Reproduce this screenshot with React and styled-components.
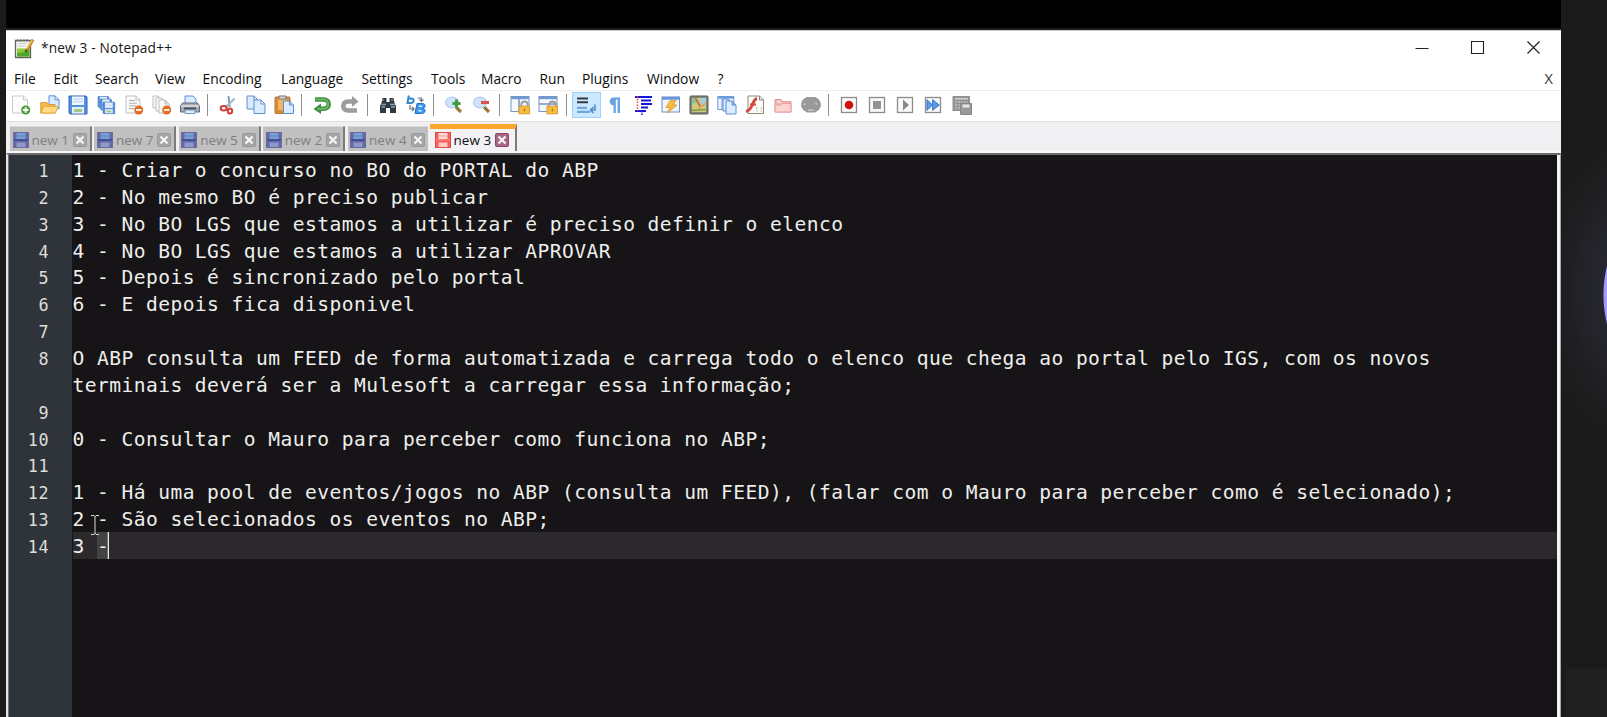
import React from "react";
import styled, { createGlobalStyle } from "styled-components";

const Global = createGlobalStyle`
  * { box-sizing: border-box; }
  html, body { margin: 0; background: #1b1b1b; overflow: hidden; }
`;

const Screen = styled.div`
  display: flex;
  width: 1607px;
  height: 717px;
  overflow: hidden;
  padding-left: 6px;
  background: #1b1b1b;
  font-family: "Open Sans", "Noto Sans", sans-serif;
`;

const Desktop = styled.div`
  display: flex;
  flex-direction: column;
  width: 1555px;
  height: 717px;
  flex: none;
`;

const TopBand = styled.div`
  height: 30px;
  flex: none;
  background: #000;
  border-bottom: 2px solid #1d1d1d;
`;

const TitleBar = styled.header`
  display: flex;
  align-items: center;
  height: 35px;
  flex: none;
  padding: 0 17px 0 8px;
  background: #fff;
  border-top: 1px solid #c9c7c9;
`;

const Title = styled.span`
  margin-left: 6px;
  font-size: 13.7px;
  letter-spacing: 0.16px;
  line-height: 20px;
  color: #161616;
  white-space: pre;
  flex: 1;
`;

const WindowButtons = styled.div`
  display: flex;
  gap: 36px;
  align-items: center;
  padding-bottom: 1px;
`;

const MenuBar = styled.nav`
  display: flex;
  align-items: center;
  height: 25px;
  flex: none;
  padding-left: 8px;
  padding-top: 2px;
  background: #fff;
  color: #0c0c0c;
  font-size: 13.8px;
`;

const MenuItem = styled.span`
  width: ${(p) => p.$w}px;
  flex: none;
  line-height: 24px;
  white-space: nowrap;
`;

const CloseDoc = styled.span`
  margin-left: auto;
  padding-right: 8px;
  color: #333;
  font-size: 14.5px;
  line-height: 24px;
`;

const ToolBar = styled.div`
  display: flex;
  align-items: center;
  height: 31px;
  flex: none;
  padding-left: 1.4px;
  padding-bottom: 2px;
  background: #fff;
  border-top: 1px solid #ededee;
`;

const ToolButton = styled.span`
  display: flex;
  align-items: center;
  justify-content: center;
  width: 28.1px;
  height: 26px;
  flex: none;
  background: ${(p) => (p.$on ? "#cce8ff" : "transparent")};
  border: 1px solid ${(p) => (p.$on ? "#99d1ff" : "transparent")};
  svg { flex: none; display: block; }
`;

const Separator = styled.span`
  display: flex;
  width: 9.9px;
  flex: none;
  padding-left: 3px;
  &::before { content: ""; width: 1px; height: 22px; background: #8f8f8f; }
`;

const TabStrip = styled.div`
  display: flex;
  align-items: flex-end;
  height: 32px;
  flex: none;
  padding-left: 4px;
  background: #f0eff1;
  border-top: 1px solid #e0e0e0;
  border-bottom: 2px solid #f8f7f8;
`;

const Tab = styled.div`
  display: flex;
  align-items: center;
  flex: none;
  width: ${(p) => (p.$active ? 87 : p.$last ? 80 : 82)}px;
  height: ${(p) => (p.$active ? 27.5 : 25)}px;
  margin-right: ${(p) => (p.$last ? 2 : 2.4)}px;
  padding-top: ${(p) => (p.$active ? 0 : 1)}px;
  padding-left: ${(p) => (p.$active ? 5 : 2.5)}px;
  border-top: ${(p) => (p.$active ? "5px solid #fba62d" : "1px solid #d8d8d8")};
  border-right: ${(p) => (p.$last ? "none" : "2px solid #7b7b7b")};
  background: ${(p) => (p.$active ? "#f2f1f3" : "#c0c0c0")};
  color: ${(p) => (p.$active ? "#0d0d14" : "#7f7f7f")};
  svg { flex: none; }
`;

const TabLabel = styled.span`
  width: 44.5px;
  padding-left: 3px;
  flex: none;
  font-size: 13.5px;
  line-height: 20px;
  white-space: nowrap;
`;

const Editor = styled.main`
  display: flex;
  flex: 1;
  min-height: 0;
  border-top: 2px solid #6c6b6e;
  border-left: 2px solid #e5e1e4;
  border-right: 1px solid #a5a4a6;
  background: #161416;
`;

const Lines = styled.div`
  position: relative;
  display: flex;
  flex-direction: column;
  flex: 1;
  border-left: 1px solid #77777a;
  border-right: 3px solid #f5f1f4;
  background: linear-gradient(90deg, #2e3439 0 63.5px, #161416 63.5px);
  padding-top: 1.1px;
`;

const Line = styled.div`
  display: flex;
  height: 26.85px;
  flex: none;
  font-family: "DejaVu Sans Mono", monospace;
`;

const LineNumber = styled.span`
  width: 63.5px;
  padding-right: 23.5px;
  flex: none;
  text-align: right;
  font-size: 16.8px;
  letter-spacing: 0.5px;
  line-height: 31px;
  color: #dcdedb;
`;

const Code = styled.span`
  flex: 1;
  font-size: 19.6px;
  letter-spacing: 0.44px;
  line-height: 30.5px;
  color: #eeeeec;
  white-space: pre;
  background: ${(p) => (p.$current ? "#2b292b" : "transparent")};
`;

const Selected = styled.span`
  display: inline-block;
  height: 26.85px;
  vertical-align: top;
  background: #434244;
  box-shadow: inset -1.3px 0 #e8e8e8;
`;

const Pointer = styled.svg`
  position: absolute;
  left: 79px;
  top: 360px;
`;

const SidePanel = styled.aside`
  display: flex;
  flex-direction: column;
  justify-content: flex-end;
  flex: 1;
  padding-left: 5px;
  background:
    radial-gradient(circle 122px at 164px 295px, #a09cfc 0 121px, transparent 122px),
    radial-gradient(ellipse 100px 155px at 78px 290px, #2c2b3b 0, #26262f 42%, #1f1f22 75%, transparent 100%),
    #1b1b1b;
`;

const SideFooter = styled.div`
  height: 49px;
  background: #202020;
`;

const Svg = ({ children, s = 20, b = 20 }) => (
  <svg width={s} height={s} viewBox={`0 0 ${b} ${b}`} fill="none">{children}</svg>
);

const Sheet = ({ x = 0, y = 0, w = 11, h = 14, fill = "#dcebff", stroke = "#5d8fd0" }) => (
  <path
    d={`M${x} ${y}h${w - 4}l4 4v${h - 4}h${-w}z M${x + w - 4} ${y}v4h4`}
    fill={fill}
    stroke={stroke}
  />
);

const Badge = ({ color, plus }) => (
  <>
    <circle cx="14.7" cy="15" r="4.5" fill={color} />
    <path d={plus ? "M12 15h5.4M14.7 12.3v5.4" : "M12 15h5.4"} stroke="#fff" strokeWidth="1.8" />
  </>
);

const Disk = ({ x = 0, y = 0, k = 1 }) => (
  <g transform={`translate(${x} ${y}) scale(${k})`}>
    <path d="M1 1h17l1 1v17H2l-1-1z" fill="#5690dc" stroke="#2f67b8" />
    <path d="M4 1.5h12v8.5H4z" fill="#edf5ff" />
    <path d="M5 4h10M5 6.8h10" stroke="#b5cfee" />
    <path d="M4 12h12v6.5H4z" fill="#e9eff4" />
    <path d="M6 14h8v3H6z" fill="#9cc98b" />
  </g>
);

const Lens = ({ children }) => (
  <Svg>
    <path d="m12 12 5 5" stroke="#a98543" strokeWidth="3.4" />
    <path d="m11 11 5 5" stroke="#6c6148" strokeWidth="1" />
    <ellipse cx="8" cy="7.5" rx="6.5" ry="5.4" fill="#cfe3fb" stroke="#b4cfef" strokeWidth="1.2" />
    {children}
  </Svg>
);

const SyncPane = ({ across }) => (
  <Svg>
    <rect x="1" y="1.5" width="18" height="15" fill="#f4f8ff" stroke="#7896c0" />
    <path d="M1 3h18" stroke="#6f9ad6" strokeWidth="2.4" />
    <path d={across ? "M1 9h18" : "M9 3v13"} stroke="#7896c0" strokeWidth="1.5" />
    <path d="M11.3 12V9.7a3.2 3.2 0 0 1 6.4 0V12" stroke="#9b9b9b" strokeWidth="1.8" />
    <rect x="9" y="11.2" width="10.5" height="7.6" fill="#f9bd3e" stroke="#dd9c38" />
    <path d="M14.4 13.5v3" stroke="#b87820" strokeWidth="1.4" />
  </Svg>
);

const Frame = ({ children }) => (
  <Svg>
    <rect x="2.5" y="2.5" width="15" height="15" fill="#fafafa" stroke="#8b8b8b" strokeWidth="1.3" />
    {children}
  </Svg>
);

const icons = {
  create: <Svg><Sheet x={1.5} y={1} w={15} h={17} fill="#fcfcfc" stroke="#c9c9c9" /><Badge color="#4c9b3a" plus /></Svg>,
  open: (
    <Svg>
      <Sheet x={9} y={0.8} w={10} h={13} />
      <path d="M.8 18V7.5h6l1.5 2H15V18z" fill="#f7b94d" stroke="#dd9a35" />
      <path d="m1 18 2.5-6.5H18L15.5 18z" fill="#ffdc80" stroke="#e3a743" />
    </Svg>
  ),
  save: <Svg><Disk /></Svg>,
  saveAll: <Svg><Disk x={1.5} y={1} k={0.6} /><Disk x={4} y={3.5} k={0.6} /><Disk x={6.5} y={6.5} k={0.64} /></Svg>,
  close: (
    <Svg>
      <Sheet x={2} y={1} w={14} h={17} fill="#fafafa" stroke="#c0c0c0" />
      <path d="M5 5.5h6M5 8.2h8M5 10.9h7M5 13.6h5" stroke="#aaa" />
      <Badge color="#e76c23" />
    </Svg>
  ),
  closeAll: (
    <Svg>
      <Sheet x={1} y={1} w={9} h={12} fill="#fafafa" stroke="#bfbfbf" />
      <Sheet x={4} y={3} w={10} h={13} fill="#fafafa" stroke="#bfbfbf" />
      <Sheet x={7} y={5} w={10} h={13} fill="#fafafa" stroke="#bfbfbf" />
      <Badge color="#e76c23" />
    </Svg>
  ),
  print: (
    <Svg>
      <path d="M5 9V1h8l3 3v5" fill="#d9ebff" stroke="#5d91d6" />
      <path d="M2.5 8h15l2 3v6H.5v-6z" fill="#a7abb1" stroke="#606974" />
      <path d="M1 11h18" stroke="#e1e3e6" strokeWidth="1.5" />
      <path d="M4 12.5h12v2H4z" fill="#464d55" />
      <path d="M5 15h10v3.5H5z" fill="#dceaff" stroke="#7798c1" />
    </Svg>
  ),
  cut: (
    <Svg>
      <path d="m10.5 1 1.2 11" stroke="#7f9ebb" strokeWidth="2" />
      <path d="M16.5 3.5 8 12" stroke="#9eb8cf" strokeWidth="2.2" />
      <ellipse cx="5.7" cy="13.3" rx="3" ry="2.2" stroke="#cf3d36" strokeWidth="2" />
      <ellipse cx="12" cy="16" rx="2.2" ry="2.5" stroke="#cf3d36" strokeWidth="2" />
    </Svg>
  ),
  copy: <Svg><Sheet x={1} y={1} w={11} h={13} /><Sheet x={8} y={5} w={11} h={13.5} /></Svg>,
  paste: (
    <Svg>
      <rect x="1" y="2" width="15" height="16.5" rx="1" fill="#d88c38" stroke="#b97531" />
      <path d="M4 4h9v11H4z" fill="#f2b562" />
      <path d="M5 1h7v3H5z" fill="#d9d9d9" stroke="#777" />
      <Sheet x={9.5} y={6} w={10} h={12.5} />
    </Svg>
  ),
  undo: (
    <Svg>
      <path d="M3 4.5h8.5c7 0 7 9.3 0 9.3H7" stroke="#3b8b43" strokeWidth="4.6" />
      <path d="M9 8.5V19L1.5 14z" fill="#3b8b43" />
      <path d="M3.5 4.5h8c6.4 0 6.4 9.3 0 9.3H5" stroke="#67b45d" strokeWidth="2.2" />
    </Svg>
  ),
  redo: (
    <Svg>
      <path d="M17 15.5H8c-6.3 0-6.3-9 0-9h5" stroke="#9c9c9c" strokeWidth="4.6" />
      <path d="M12 1v11l6.5-5.5z" fill="#9c9c9c" />
    </Svg>
  ),
  find: (
    <Svg>
      <path d="M4.5 3h4v4h3V3h4l1 5 1.5 3v7h-6v-5H8v5H2v-7l1.5-3z" fill="#303841" />
      <path d="M5 4v2m9-2v2M3.5 12H7m6 0h4M3.5 9.5H8m4 0h5" stroke="#8d9fae" strokeWidth="1.3" />
    </Svg>
  ),
  replace: (
    <Svg>
      <path d="M2.8.5 1.5 8h3.3c3.5 0 4-4.5.5-4.5h-3" stroke="#3287d1" strokeWidth="2" />
      <path d="M4 10v4h4m-2-2 2.2 2L6 16.2M11.5 3h4v3m-2-1.5 2 2 2-2" stroke="#6b7682" strokeWidth="1.2" />
      <path d="m11 8.5-2 10h6.5c4.8 0 4.3-5 1.4-5 3.2-.8 2.9-5-.4-5z" fill="#3f98ed" stroke="#246fc5" />
      <path d="M13 11.2h3m-3.5 4.5h3" stroke="#e5f3ff" strokeWidth="1.5" />
    </Svg>
  ),
  zoomIn: <Lens><path d="M8.5 8.5h8M12.5 4.5v8" stroke="#3b9b43" strokeWidth="3" /></Lens>,
  zoomOut: <Lens><path d="M9 7.5h8" stroke="#dd5548" strokeWidth="3.2" /></Lens>,
  syncV: <SyncPane />,
  syncH: <SyncPane across />,
  wrap: (
    <Svg>
      <path d="M1 3.5h11M1 7.2h11" stroke="#343941" strokeWidth="2" />
      <path d="M1 12.8h10M1 16.8h13" stroke="#6fa6dc" strokeWidth="2.2" />
      <path d="M19 9.5v5.5h-4m2.5-3-3 3 3 3" stroke="#4e89c5" strokeWidth="1.5" />
    </Svg>
  ),
  pilcrow: (
    <Svg>
      <path d="M15 2.5H8.5c-5 0-5 7.8 0 7.8V18h2.3V4.5h1.8V18H15z" fill="#65a3e4" />
    </Svg>
  ),
  indent: (
    <Svg>
      <path d="M2 2h17M8 5.5h10M8 9h11M8 12.5h7M2 16h11" stroke="#1517d6" strokeWidth="2.1" />
      <path d="M9 16v4" stroke="#1517d6" strokeWidth="1.5" strokeDasharray="1.5 1" />
      <path d="M4.5 1v15" stroke="#ed3d35" strokeWidth="1.4" strokeDasharray="1.5 1.3" />
    </Svg>
  ),
  lang: (
    <Svg>
      <rect x="1" y="2" width="17.5" height="15" fill="#f0f4fb" stroke="#7192c3" />
      <path d="M1 3.3h17.5" stroke="#6595d8" strokeWidth="2.8" />
      <path d="m9 5.8 6-.3-3 4.5h4L6.5 18l2.3-5.5H5z" fill="#f9bd3d" stroke="#dfa040" />
    </Svg>
  ),
  map: (
    <Svg>
      <rect x="1" y="1" width="18" height="18" rx="1" fill="#85897a" stroke="#55584f" />
      <path d="M3 3h14v14H3z" fill="#b9d38b" />
      <path d="M3 11.5 7 10l10 4v3H3z" fill="#d9c873" />
      <path d="M12 3h5v8l-4-1z" fill="#a4cff5" />
      <path d="M3 3h4l2 4-6 2z" fill="#8bc0a0" />
      <path d="m6.5 3 5 9" stroke="#d9653a" strokeWidth="1.8" />
      <path d="m9 14 8-6" stroke="#dfa35c" strokeWidth="2" />
      <path d="m3 15.5 14-1" stroke="#6f9e52" strokeWidth="1.5" />
    </Svg>
  ),
  docs: (
    <Svg>
      <path d="M.8 1.5h16v13H.8z" fill="#edf4ff" stroke="#6e99d8" />
      <path d="M1 2.5h16" stroke="#6a9bdd" strokeWidth="2.2" />
      <path d="M5 3v11" stroke="#6e99d8" />
      <Sheet x={6} y={4} w={9} h={12} /><Sheet x={9} y={6} w={10} h={13} />
    </Svg>
  ),
  func: (
    <Svg>
      <Sheet x={3} y={1} w={15.5} h={17.5} fill="#fffef8" stroke="#8a8779" />
      <path d="M12 3.5c-3 .5-3.5 4-5 7-1.300 3-2.500 5-6 6" stroke="#d34b45" strokeWidth="3" />
      <path d="M5 9.500h6" stroke="#d34b45" strokeWidth="2.200" />
      <path d="M12.500 12c-1.300 1.500-1.300 3 0 4.500m3.300-4.500c1.300 1.500 1.300 3 0 4.500" stroke="#a5a5a5" strokeDasharray="2 1" />
    </Svg>
  ),
  folder: (
    <Svg>
      <path d="M2 17V4.500h6l1.500 2.200h8.500V17z" fill="#f3b6b6" stroke="#e39294" />
      <path d="M2 17V10h6l1.500-1.500H18V17z" fill="#fbd3d1" stroke="#e5a0a2" />
      <path d="M4.500 7h3" stroke="#fff" />
    </Svg>
  ),
  monitor: (
    <Svg>
      <path d="M5.500 2h9l4 3 1.300 3.500v3l-2 3.500-3.800 2.500H6L2.200 15 .2 11.500v-3L1.500 5z" fill="#999" />
      <path d="m3 10 1.500-1.500M14.500 8.200l1.800 1.300M7 15.200h6" stroke="#d0d0d0" strokeWidth="1.200" />
    </Svg>
  ),
  record: <Frame><circle cx="10" cy="10" r="4.300" fill="#d3120c" /></Frame>,
  stop: <Frame><path d="M6 6h8v8H6z" fill="#929292" /></Frame>,
  play: <Frame><path d="m8 4.500 6 5.500-6 5.500z" fill="#898989" /></Frame>,
  forward: <Frame><path d="m4 4.700 5.500 5.300L4 15.300zM9.700 4.700l6.500 5.300-6.500 5.300z" fill="#5c9eec" stroke="#2f71c7" /></Frame>,
  macroSave: (
    <Svg>
      <path d="M.500 1H18v15H.500z" fill="#929292" />
      <path d="M3 3.800h13" stroke="#e5e5e5" strokeWidth="1.200" />
      <path d="M3 7h13M3 10h6M3 13h5" stroke="#d5d5d5" strokeWidth="1.200" strokeDasharray="2 1" />
      <path d="M8.500 8.500H19.500V19.500H8.500z" fill="#999" stroke="#858585" />
      <path d="M10.500 9.500h7v3h-7z" fill="#e6e6e6" />
    </Svg>
  ),
};

const toolGroups = [
  ["create", "open", "save", "saveAll", "close", "closeAll", "print"],
  ["cut", "copy", "paste"],
  ["undo", "redo"],
  ["find", "replace"],
  ["zoomIn", "zoomOut"],
  ["syncV", "syncH"],
  ["wrap", "pilcrow", "indent", "lang", "map", "docs", "func", "folder", "monitor"],
  ["record", "stop", "play", "forward", "macroSave"],
];

const menus = [
  ["File", 39.5], ["Edit", 41.5], ["Search", 60], ["View", 47.5], ["Encoding", 78.5],
  ["Language", 80.5], ["Settings", 69.5], ["Tools", 50], ["Macro", 58.5], ["Run", 42.5],
  ["Plugins", 65], ["Window", 70.5], ["?", 10],
];

const rows = [
  [1, "1 - Criar o concurso no BO do PORTAL do ABP"],
  [2, "2 - No mesmo BO é preciso publicar"],
  [3, "3 - No BO LGS que estamos a utilizar é preciso definir o elenco"],
  [4, "4 - No BO LGS que estamos a utilizar APROVAR"],
  [5, "5 - Depois é sincronizado pelo portal"],
  [6, "6 - E depois fica disponivel"],
  [7, ""],
  [8, "O ABP consulta um FEED de forma automatizada e carrega todo o elenco que chega ao portal pelo IGS, com os novos"],
  ["", "terminais deverá ser a Mulesoft a carregar essa informação;"],
  [9, ""],
  [10, "0 - Consultar o Mauro para perceber como funciona no ABP;"],
  [11, ""],
  [12, "1 - Há uma pool de eventos/jogos no ABP (consulta um FEED), (falar com o Mauro para perceber como é selecionado);"],
  [13, "2 - São selecionados os eventos no ABP;"],
];

const TabDisk = ({ active }) => (
  <Svg s={16} b={16}>
    <rect x=".5" y=".5" width="15" height="15" fill={active ? "#f4605c" : "#6268a8"} stroke={active ? "#e04a48" : "#6f6a9c"} />
    <path d="M3.500 1h9v6h-9z" fill={active ? "#ffd9d5" : "#7b9fd2"} />
    <path d="M4 4h8" stroke={active ? "#f79a94" : "#5685c5"} />
    <path d="M1 8h14" stroke={active ? "#ff7f78" : "#414a92"} strokeWidth="1.600" />
    <path d="M3.500 10.500h9V15h-9z" fill={active ? "#ffc7c2" : "#8d9ac8"} />
  </Svg>
);

const TabClose = ({ active }) => (
  <Svg s={14} b={14}>
    <rect x=".5" y=".5" width="13" height="13" rx="1" fill={active ? "#aa6583" : "#a5a5a5"} stroke={active ? "#8d4569" : "#999"} />
    <path d="m3.500 3.500 7 7m0-7-7 7" stroke="#f5f5f5" strokeWidth="2.300" />
  </Svg>
);

const AppLogo = () => (
  <Svg s={21} b={21}>
    <path d="M1.500 2.500h15v17h-15z" fill="#f5f6f4" stroke="#64645f" strokeWidth="1.300" />
    <path d="M3 10.500h12.500v8H3z" fill="#8ccb2f" />
    <path d="M3 15c5 0 9-1 12.500-4.500v8H3z" fill="#4fa62c" />
    <path d="M4 5.500h9M4 8h7" stroke="#c9cdc9" />
    <path d="M4 1v3m3-3v3m3-3v3m3-3v3" stroke="#777" strokeWidth="1" />
    <path d="m19 1.500-6 10.500" stroke="#cc8127" strokeWidth="3" />
    <path d="m18.200 2-5.200 8.500" stroke="#ffd05b" strokeWidth="1.200" />
    <path d="m11 14.500.3-3 2.200 1z" fill="#333" />
  </Svg>
);

export default function App() {
  const tabs = ["new 1", "new 7", "new 5", "new 2", "new 4", "new 3"];
  return (
    <>
      <Global />
      <Screen>
        <Desktop>
          <TopBand />
          <TitleBar>
            <AppLogo />
            <Title>*new 3 - Notepad++</Title>
            <WindowButtons>
              <svg width="20" height="20" fill="none"><path d="M3.5 10.5h13" stroke="#222" /></svg>
              <svg width="20" height="20" fill="none"><path d="M3.5 3.5h12v12h-12z" stroke="#222" strokeWidth="1.1" /></svg>
              <svg width="20" height="20" fill="none"><path d="m3.5 3.5 12 12m0-12-12 12" stroke="#222" strokeWidth="1.2" /></svg>
            </WindowButtons>
          </TitleBar>
          <MenuBar>
            {menus.map(([name, w]) => <MenuItem key={name} $w={w}>{name}</MenuItem>)}
            <CloseDoc>X</CloseDoc>
          </MenuBar>
          <ToolBar>
            {toolGroups.map((group, i) => (
              <React.Fragment key={group[0]}>
                {i > 0 && <Separator />}
                {group.map((name) => (
                  <ToolButton key={name} $on={name === "wrap"}>{icons[name]}</ToolButton>
                ))}
              </React.Fragment>
            ))}
          </ToolBar>
          <TabStrip>
            {tabs.map((name, i) => (
              <Tab key={name} $active={i === 5} $last={i === 4}>
                <TabDisk active={i === 5} />
                <TabLabel>{name}</TabLabel>
                <TabClose active={i === 5} />
              </Tab>
            ))}
          </TabStrip>
          <Editor>
            <Lines>
              {rows.map(([n, text], i) => (
                <Line key={i}>
                  <LineNumber>{n}</LineNumber>
                  <Code>{text}</Code>
                </Line>
              ))}
              <Line>
                <LineNumber>14</LineNumber>
                <Code $current>{"3 "}<Selected>-</Selected></Code>
              </Line>
              <Pointer width="14" height="20" fill="none">
                <path d="M3 .5h3l1 1 1-1h3M7 1v18M3 19.500h3l1-1 1 1h3" stroke="#d8d8d8" />
              </Pointer>
            </Lines>
          </Editor>
        </Desktop>
        <SidePanel><SideFooter /></SidePanel>
      </Screen>
    </>
  );
}
